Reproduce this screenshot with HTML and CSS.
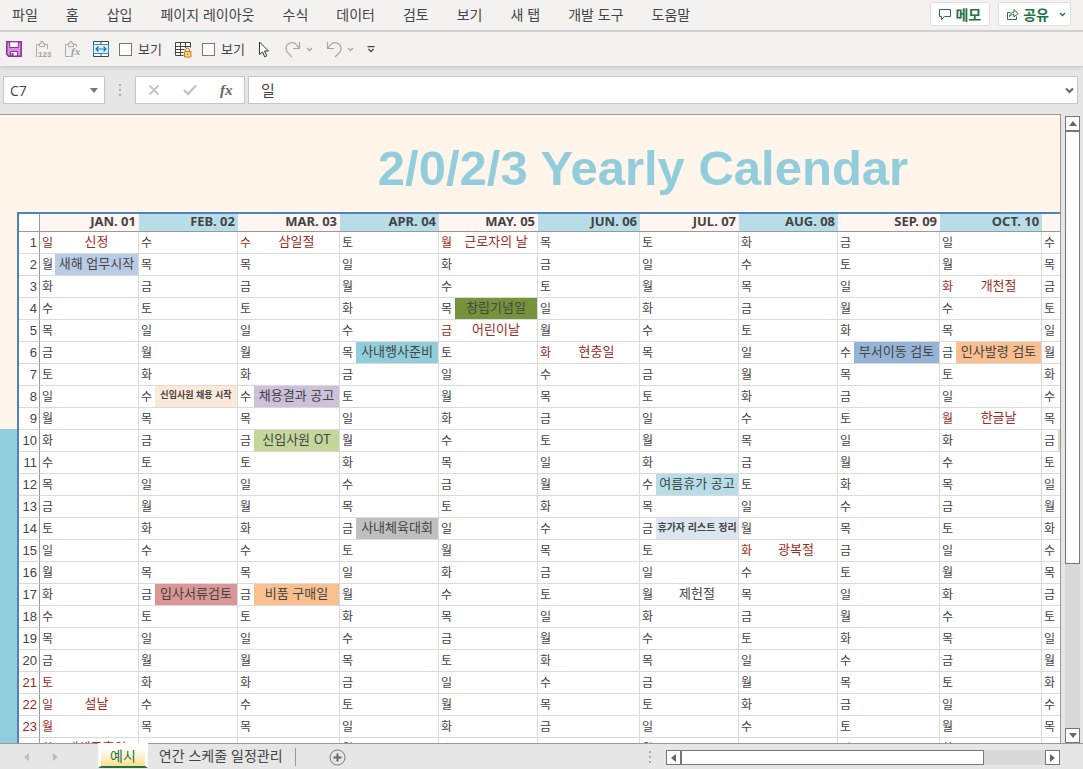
FILE: index.html
```
<!DOCTYPE html>
<html lang="ko">
<head>
    <meta charset="UTF-8">
    <meta name="viewport" content="width=device-width, initial-scale=1.0">
    <title>연간 스케줄 일정관리</title>
    <link rel="stylesheet" href="styles.css">
</head>
<body>
    <header class="menu">
        <nav class="menu-tabs">
            <a href="#">파일</a>
            <a href="#">홈</a>
            <a href="#">삽입</a>
            <a href="#">페이지 레이아웃</a>
            <a href="#">수식</a>
            <a href="#">데이터</a>
            <a href="#">검토</a>
            <a href="#">보기</a>
            <a href="#">새 탭</a>
            <a href="#">개발 도구</a>
            <a href="#">도움말</a>
        </nav>
        <button class="btn-top">
            <svg width="12" height="12" viewBox="0 0 12 12"><path d="M.5 1.5h11v7h-6l-3 3v-3h-2z"/></svg>
            메모
        </button>
        <button class="btn-top">
            <svg width="12" height="12" viewBox="0 0 12 12"><path d="M3.500 4.500h-3v7h9v-3M2.500 8.500c.5-3 2-4 4.500-4v-3l4 4-4 3.500v-2.500c-2 0-3 .5-4.500 2z"/></svg>
            공유
            <svg class="share-arrow" width="7" height="5" viewBox="0 0 7 5"><path d="M1 1l2.500 2.500L6 1"/></svg>
        </button>
    </header>

    <div class="toolbar">
        <button class="tool" aria-label="저장">
            <svg width="16" height="16" viewBox="0 0 16 16"><path d="M.8.8h14.400v14.400H2.800l-2-2z" fill="#d58fdd" stroke="#8b2f97" stroke-width="1.500"/><path d="M3.700.8h8.600v5.700H3.700z" fill="#fff" stroke="#8b2f97"/><path d="M4.500 15v-4.500h7V15z" fill="#fff" stroke="#8b2f97"/><path d="M6.500 12v3" stroke="#8b2f97" stroke-width="2"/></svg>
        </button>
        <button class="tool" aria-label="값 붙여넣기">
            <svg width="16" height="17" viewBox="0 0 16 17"><path d="M1.500 15.500v-12h3m5 0h3V8M1 15.500h1.500M4.500 5.500v-3h1.500v-2h2v2h1.500v3z" fill="none" stroke="#aaa"/><text x="3" y="16" class="icon-num">123</text></svg>
        </button>
        <button class="tool" aria-label="수식 붙여넣기">
            <svg width="16" height="17" viewBox="0 0 16 17"><path d="M6.500 15.500h-5v-12h3m5 0h3V6M4.500 5.500v-3h1.500v-2h2v2h1.500v3z" fill="none" stroke="#aaa"/><text x="7" y="14" class="icon-fx">fx</text></svg>
        </button>
        <button class="tool" aria-label="병합하고 가운데 맞춤">
            <svg width="16" height="16" viewBox="0 0 16 16"><path d="M.5.5h15v15H.5z" fill="#fff" stroke="#444"/><path d="M8 1v3M8 12v3" stroke="#444"/><path d="M.5 3.500h15v9H.5z" fill="#dff1fb" stroke="#2b8fc7"/><path d="M3 8h10M5.500 5.500L3 8l2.500 2.500m5-5L13 8l-2.500 2.500" fill="none" stroke="#1a6fae" stroke-width="1.200"/></svg>
        </button>
        <label class="check"><input type="checkbox">보기</label>
        <button class="tool" aria-label="시트 보호">
            <svg width="17" height="17" viewBox="0 0 17 17"><path d="M.5 1.500h15v12H.5z" fill="#fff"/><path d="M8.500 14.500h-8v-13h15v5M.5 5.500h15M.5 8.500h9M.5 11.500h8M5.500 2v12M10.500 2v5" fill="none" stroke="#444"/><path d="M10.500 10.500V9a2 2 0 0 1 4 0v1.500" fill="#f3f2f1" stroke="#c86b0a"/><path d="M9.500 10.500h6.500v5.500H9.500z" fill="#fddc8c" stroke="#d57a15"/><path d="M12.700 12.500v1.500" stroke="#b05c00"/></svg>
        </button>
        <label class="check"><input type="checkbox">보기</label>
        <button class="tool" aria-label="개체 선택">
            <svg width="14" height="17" viewBox="0 0 14 17"><path d="M1.500 1v12.500l3-2.700 2.200 5 2-.9-2.200-4.900h4z" fill="#fff" stroke="#333"/></svg>
        </button>
        <button class="tool split" aria-label="다시 실행">
            <svg width="16" height="17" viewBox="0 0 16 17"><path d="M14.500 1v6.500H8M14 7C11 2 8 1 5 2 0 4 0 9 3 12l4 4" fill="none" stroke="#a6a6a6" stroke-width="1.200"/></svg>
            <svg width="7" height="5" viewBox="0 0 7 5"><path d="M1 1l2.500 2.500L6 1" fill="none" stroke="#a6a6a6" stroke-width="1.300"/></svg>
        </button>
        <button class="tool split" aria-label="실행 취소">
            <svg width="16" height="17" viewBox="0 0 16 17"><path d="M1.500 1v6.500H8M2 7C5 2 8 1 11 2c5 2 5 7 2 10l-4 4" fill="none" stroke="#a6a6a6" stroke-width="1.200"/></svg>
            <svg width="7" height="5" viewBox="0 0 7 5"><path d="M1 1l2.500 2.500L6 1" fill="none" stroke="#a6a6a6" stroke-width="1.300"/></svg>
        </button>
        <button class="tool" aria-label="빠른 실행 도구 모음 사용자 지정">
            <svg width="8" height="7" viewBox="0 0 8 7"><path d="M.5.7h7M1.500 3L4 5.500 6.500 3" fill="none" stroke="#444" stroke-width="1.300"/></svg>
        </button>
    </div>

    <div class="formula">
        <div class="namebox">
            <input type="text" value="C7" aria-label="이름 상자">
            <svg width="8" height="5" viewBox="0 0 8 5"><path d="M0 0h8L4 5z" fill="#777"/></svg>
        </div>
        <svg class="dots" width="2" height="12" viewBox="0 0 2 12"><path d="M0 0h2v2H0zM0 5h2v2H0zM0 10h2v2H0z"/></svg>
        <div class="formula-btns">
            <button aria-label="취소"><svg width="12" height="12" viewBox="0 0 12 12"><path d="M1.500 1.500l9 9m0-9l-9 9" fill="none" stroke="#c3c3c3" stroke-width="1.800"/></svg></button>
            <button aria-label="입력"><svg width="14" height="12" viewBox="0 0 14 12"><path d="M1 6l4 4 8-8.500" fill="none" stroke="#c3c3c3" stroke-width="2.400"/></svg></button>
            <button class="fx" aria-label="함수 삽입">fx</button>
        </div>
        <div class="formula-input">
            <input type="text" value="일" aria-label="수식 입력줄">
            <svg width="9" height="7" viewBox="0 0 9 7"><path d="M1 1.500L4.500 5 8 1.500" fill="none" stroke="#666" stroke-width="2"/></svg>
        </div>
    </div>

    <main class="work">
        <div class="sheet">
            <div class="side"></div>
            <div class="pane">
                <h1>2/0/2/3 Yearly Calendar</h1>
                <table class="calendar" id="calendar"></table>
            </div>
        </div>
        <div class="vscroll">
            <button aria-label="위로"><svg width="8" height="5" viewBox="0 0 8 5"><path d="M0 5h8L4 0z"/></svg></button>
            <div class="vthumb"></div>
            <button class="last" aria-label="아래로"><svg width="8" height="5" viewBox="0 0 8 5"><path d="M0 0h8L4 5z"/></svg></button>
        </div>
    </main>

    <footer class="bottom">
        <div class="sheet-nav">
            <button aria-label="이전 시트"><svg width="5" height="8" viewBox="0 0 5 8"><path d="M5 0v8L0 4z"/></svg></button>
            <button aria-label="다음 시트"><svg width="5" height="8" viewBox="0 0 5 8"><path d="M0 0v8l5-4z"/></svg></button>
        </div>
        <button class="tab active">예시</button>
        <button class="tab">연간 스케줄 일정관리</button>
        <button class="add" aria-label="새 시트">
            <svg width="17" height="17" viewBox="0 0 17 17"><circle cx="8.500" cy="8.500" r="7.500" fill="none" stroke="#777"/><path d="M8.500 4.500v8M4.500 8.500h8" stroke="#666" stroke-width="2"/></svg>
        </button>
        <svg class="dots" width="2" height="12" viewBox="0 0 2 12"><path d="M0 0h2v2H0zM0 5h2v2H0zM0 10h2v2H0z"/></svg>
        <div class="hscroll">
            <button aria-label="왼쪽으로"><svg width="5" height="8" viewBox="0 0 5 8"><path d="M5 0v8L0 4z"/></svg></button>
            <div class="hthumb"></div>
            <button class="last" aria-label="오른쪽으로"><svg width="5" height="8" viewBox="0 0 5 8"><path d="M0 0v8l5-4z"/></svg></button>
        </div>
    </footer>
    <script src="script.js"></script>
</body>
</html>
```
FILE: styles.css
```
*{
    box-sizing: border-box;
}
body{
    margin:0;
    height:100vh;
    display:flex;
    flex-direction: column;
    overflow:hidden;
    background-color: #e6e6e6;
    color:#444;
    font-family: 'Noto Sans CJK KR', sans-serif;
    font-size:14px;
}
button{
    display:flex;
    align-items: center;
    justify-content: center;
    padding:0;
    border:0;
    background:none;
    color:inherit;
    font:inherit;
    cursor: pointer
}
input{
    font:inherit;
    color:inherit;
}
svg{
    display:block;
    flex:none;
}
/* menu */
.menu{
    display:flex;
    align-items: center;
    height:32px;
    padding:0 12px 2px;
    background-color: #f3f2f1;
    border-bottom:2px solid #d0d0d0;
    flex:none;
}
.menu-tabs{
    display:flex;
    gap:28px;
    flex:1;
}
.menu-tabs a{
    color:#444;
    text-decoration: none;
    line-height:20px;
    white-space: nowrap;
}
.btn-top{
    height:24px;
    padding:0 8px;
    gap:4px;
    margin-left:8px;
    border:1px solid #e1dfdd;
    border-radius:2px;
    background-color: #fff;
    color:#217346;
    font-weight:700;
    line-height:20px;
}
.btn-top svg{
    fill:none;
    stroke:#217346;
}
.btn-top .share-arrow{
    margin-left:6px;
    margin-right:-4px;
    stroke-width:1.3;
}
/* toolbar */
.toolbar{
    display:flex;
    align-items: center;
    height:35px;
    padding:0 6px;
    gap:13px;
    background-color: #f3f2f1;
    border-bottom:1px solid #d0d0d0;
    box-shadow:0 1px 4px #ccc;
    flex:none;
}
.split{
    gap:5px;
}
.check{
    display:flex;
    align-items: center;
    gap:6px;
    margin-left:-3px;
    font-size:13px;
    line-height:20px;
}
.check input{
    appearance: none;
    width:13px;
    height:13px;
    margin:0;
    border:1px solid #777;
    background-color: #fff;
}
.icon-num{
    font:bold 8px 'Liberation Sans', sans-serif;
    fill:#a0a0a0;
}
.icon-fx{
    font:italic bold 11px 'Liberation Serif', serif;
    fill:#a0a0a0;
}
/* formula bar */
.formula{
    display:flex;
    align-items: center;
    height:47px;
    padding:0 5px 1px 3px;
    flex:none;
}
.namebox, .formula-btns, .formula-input{
    display:flex;
    align-items: center;
    height:28px;
    background-color: #fff;
    border:1px solid #c6c6c6;
}
.namebox{
    width:102px;
    padding:0 6px;
}
.namebox input, .formula-input input{
    flex:1;
    min-width:0;
    padding:0 0 2px;
    border:0;
    outline:0;
    background:none;
}
.namebox input{
    padding:0;
    font-family: 'Open Sans', sans-serif;
}
.dots{
    margin:0 14px;
    fill:#aaa;
}
.formula-btns{
    width:110px;
    margin-right:3px;
    justify-content: space-around;
}
.fx{
    font:italic bold 15px 'Liberation Serif', serif;
    color:#666;
}
.formula-input{
    flex:1;
    padding:0 3px 0 12px;
    font-size:15px;
}
/* sheet */
.work{
    display:flex;
    flex:1;
    min-height:0;
}
.sheet{
    display:flex;
    flex:1;
    min-width:0;
    overflow:hidden;
    border-top:1px solid #999;
    border-right:1px solid #999;
    background-color: #fff5eb;
}
.side{
    width:17px;
    flex:none;
    background:linear-gradient(#fff5eb 314px, #92cddc 314px);
}
.pane{
    flex:none;
    width:1226px;
}
.pane h1{
    margin:0;
    padding:26px 0 0 26px;
    height:97px;
    text-align:center;
    font:bold 49px/54px 'Liberation Sans', sans-serif;
    color:#92cddc;
}
.calendar{
    table-layout: fixed;
    width:1226px;
    border-collapse: separate;
    border-spacing:0;
    border-top:2px solid #4f81bd;
    border-left:2px solid #4f81bd;
    background-color: #fff;
}
.col-no{
    width:21px;
}
.col-day{
    width:16px;
}
.col-first{
    width:15px;
}
.col-event{
    width:83px;
}
.col-first + .col-event{
    width:84px;
}
.col-wide{
    width:86px;
}
.calendar th, .calendar td{
    padding:0;
    white-space: nowrap;
    font-weight:400;
}
.calendar thead th{
    height:18px;
    padding:0 3px 2px 0;
    border-bottom:1px solid #999;
    background-color: #fff5f3;
    font:bold 13px/15px 'Noto Sans', sans-serif;
    text-align:right;
}
.calendar thead .even{
    background-color: #b7dee8;
}
.calendar thead th:first-child{
    background-color: #fff;
}
.calendar tr > :first-child{
    border-right:1px solid #999;
}
.calendar tbody th{
    height:22px;
    padding-right:2px;
    font:13px/21px 'Liberation Sans', sans-serif;
    text-align:right;
    border-bottom:1px solid #dadada;
}
.calendar td{
    height:22px;
    border-bottom:1px solid #dadada;
    vertical-align: top;
}
.calendar .day{
    padding-left:2px;
    font-size:12px;
    line-height:20px;
}
.calendar .event{
    border-right:1px solid #dadada;
    font-size:13px;
    line-height:18px;
    text-align:center;
}
.calendar .holiday{
    color:#9c2a20;
}
.calendar .small{
    font-size:9px;
    font-weight:700;
}
.calendar .medium{
    font-size:10px;
    font-weight:700;
}
.blue{ background-color: #b8cce4; }
.olive{ background-color: #76933c; }
.aqua{ background-color: #92cddc; }
.peach{ background-color: #fde9d9; }
.purple{ background-color: #ccc0da; }
.green{ background-color: #c4d79b; }
.gray{ background-color: #bfbfbf; }
.red{ background-color: #da9694; }
.orange{ background-color: #fabf8f; }
.sky{ background-color: #b7dee8; }
.pale{ background-color: #dce6f1; }
.navy{ background-color: #95b3d7; }
.sand{ background-color: #ddd9c4; }
/* scroll bars */
.vscroll{
    display:flex;
    flex-direction: column;
    width:15px;
    margin:2px 3px 0 4px;
    background-color: #d9d9d9;
}
.vscroll button, .hscroll button{
    width:15px;
    height:15px;
    flex:none;
    border:1px solid #777;
    background-color: #fff;
    fill:#666;
}
.vthumb, .hthumb{
    border:1px solid #777;
    background-color: #fff;
}
.vthumb{
    height:69%;
}
.vscroll .last{
    margin-top:auto;
}
/* sheet tabs */
.bottom{
    display:flex;
    height:26px;
    padding-right:23px;
    border-top:1px solid #999;
    flex:none;
}
.sheet-nav{
    display:flex;
    gap:24px;
    padding:0 40px 0 24px;
    fill:#bbb;
}
.tab{
    height:24px;
    padding:0 12px 2px 11px;
    line-height:20px;
    white-space: nowrap;
}
.tab.active{
    margin-top:-1px;
    height:25px;
    padding:0 9px;
    border:solid #fff;
    border-width:0 3px;
    border-bottom:2px solid #217346;
    background:linear-gradient(#fff 20%, #ffe08f);
    color:#217346;
}
.add{
    margin:4px 0 3px;
    padding-left:33px;
    border-left:1px solid #999;
}
.bottom .dots{
    margin:7px 15px 0 auto;
}
.hscroll{
    display:flex;
    width:37.2%;
    height:15px;
    margin-top:6px;
    background-color: #d9d9d9;
}
.hthumb{
    width:77%;
}
.hscroll .last{
    margin-left:auto;
}
```
FILE: script.js
```
const months = ['JAN. 01', 'FEB. 02', 'MAR. 03', 'APR. 04', 'MAY. 05', 'JUN. 06', 'JUL. 07', 'AUG. 08', 'SEP. 09', 'OCT. 10', 'NOV. 11', 'DEC. 12'];
const week = ['일', '월', '화', '수', '목', '금', '토'];
const wide = [3, 6, 9, 10, 11];

// 'month-day': [text, class]
const events = {
    '1-1': ['신정', 'holiday'],
    '1-2': ['새해 업무시작', 'blue'],
    '1-22': ['설날', 'holiday'],
    '1-24': ['대체공휴일', 'holiday'],
    '2-8': ['신입사원 채용 시작', 'peach small'],
    '2-17': ['입사서류검토', 'red'],
    '3-1': ['삼일절', 'holiday'],
    '3-8': ['채용결과 공고', 'purple'],
    '3-10': ['신입사원 OT', 'green'],
    '3-17': ['비품 구매일', 'orange'],
    '4-6': ['사내행사준비', 'aqua'],
    '4-14': ['사내체육대회', 'gray'],
    '5-1': ['근로자의 날', 'holiday'],
    '5-4': ['창립기념일', 'olive'],
    '5-5': ['어린이날', 'holiday'],
    '6-6': ['현충일', 'holiday'],
    '7-12': ['여름휴가 공고', 'sky'],
    '7-14': ['휴가자 리스트 정리', 'pale medium'],
    '7-17': ['제헌절', ''],
    '8-15': ['광복절', 'holiday'],
    '9-6': ['부서이동 검토', 'navy'],
    '10-3': ['개천절', 'holiday'],
    '10-6': ['인사발령 검토', 'orange'],
    '10-9': ['한글날', 'holiday'],
    '11-10': ['', 'sand']
};

let cols = '<col class="col-no">';
let head = '<th></th>';
months.forEach((name, i) => {
    cols += `<col class="${i === 0 ? 'col-first' : 'col-day'}"><col class="${wide.includes(i + 1) ? 'col-wide' : 'col-event'}">`;
    head += `<th colspan="2" class="${i % 2 ? 'even' : ''}">${name}</th>`;
});

let body = '';
for (let day = 1; day <= 24; day++) {
    // 설 연휴
    const seol = day >= 21 && day <= 24;
    body += `<tr><th class="${seol ? 'holiday' : ''}">${day}</th>`;
    for (let month = 1; month <= 12; month++) {
        const [text, style] = events[month + '-' + day] || ['', ''];
        const red = style === 'holiday' || (month === 1 && seol);
        const name = week[new Date(2023, month - 1, day).getDay()];
        body += `<td class="day ${red ? 'holiday' : ''}">${name}</td><td class="event ${style}">${text}</td>`;
    }
    body += '</tr>';
}

document.getElementById('calendar').innerHTML = `<colgroup>${cols}</colgroup><thead><tr>${head}</tr></thead><tbody>${body}</tbody>`;
```
